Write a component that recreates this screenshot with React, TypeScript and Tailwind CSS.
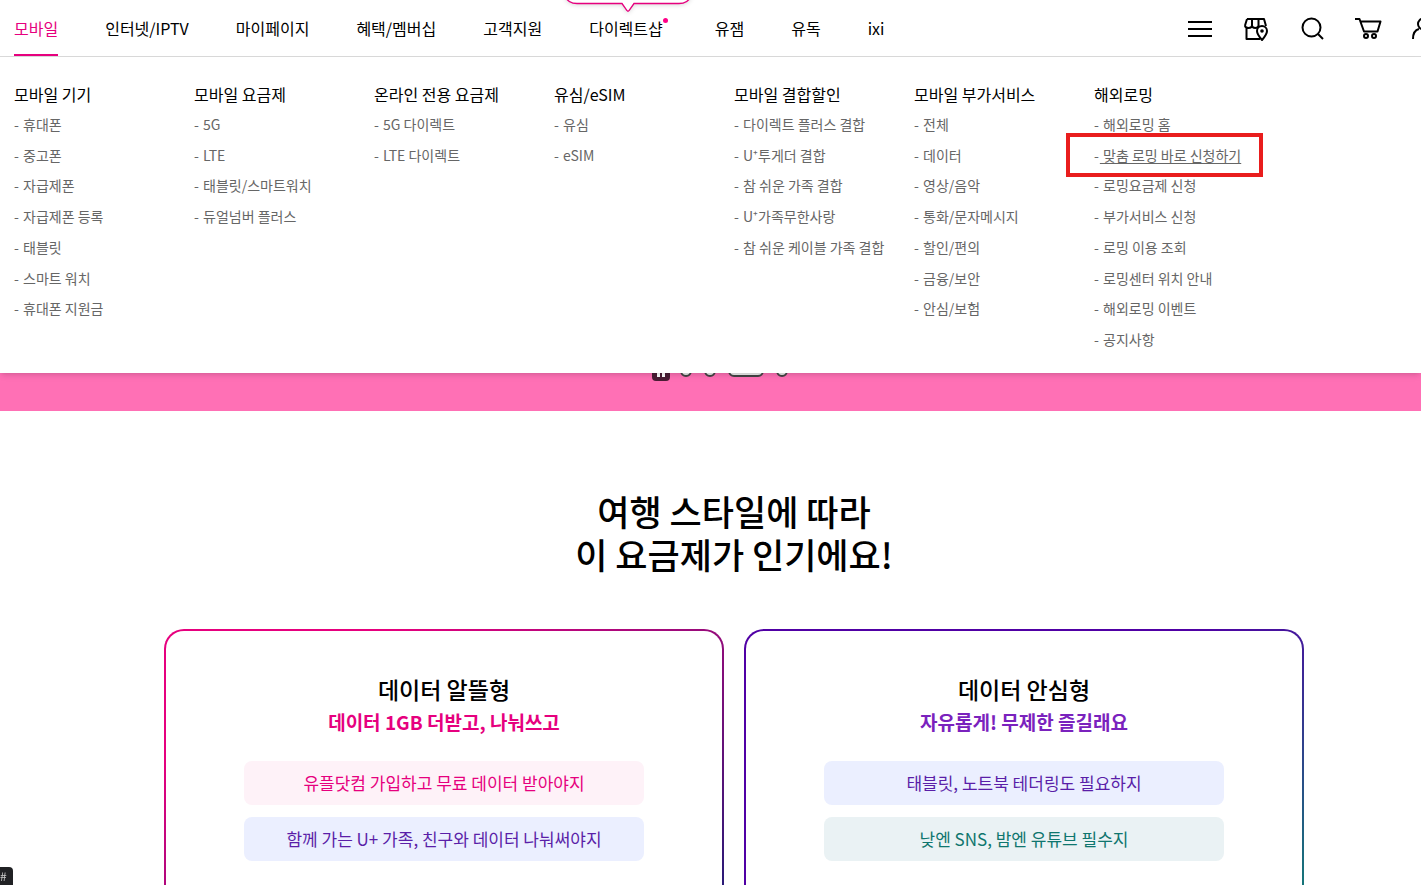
import { ReactNode } from "react";

interface MenuGroup {
  title: string;
  items: string[];
}

interface PlanCardProps {
  title: string;
  subtitle: string;
  frameClass: string;
  subtitleClass: string;
  points: { text: string; className: string }[];
}

const navItems = ["모바일", "인터넷/IPTV", "마이페이지", "혜택/멤버십", "고객지원", "다이렉트샵", "유잼", "유독", "ixi"];

const menuGroups: MenuGroup[] = [
  {
    title: "모바일 기기",
    items: ["휴대폰", "중고폰", "자급제폰", "자급제폰 등록", "태블릿", "스마트 워치", "휴대폰 지원금"],
  },
  { title: "모바일 요금제", items: ["5G", "LTE", "태블릿/스마트워치", "듀얼넘버 플러스"] },
  { title: "온라인 전용 요금제", items: ["5G 다이렉트", "LTE 다이렉트"] },
  { title: "유심/eSIM", items: ["유심", "eSIM"] },
  {
    title: "모바일 결합할인",
    items: ["다이렉트 플러스 결합", "U⁺투게더 결합", "참 쉬운 가족 결합", "U⁺가족무한사랑", "참 쉬운 케이블 가족 결합"],
  },
  {
    title: "모바일 부가서비스",
    items: ["전체", "데이터", "영상/음악", "통화/문자메시지", "할인/편의", "금융/보안", "안심/보험"],
  },
  {
    title: "해외로밍",
    items: [
      "해외로밍 홈",
      "맞춤 로밍 바로 신청하기",
      "로밍요금제 신청",
      "부가서비스 신청",
      "로밍 이용 조회",
      "로밍센터 위치 안내",
      "해외로밍 이벤트",
      "공지사항",
    ],
  },
];

const highlighted = "맞춤 로밍 바로 신청하기";

const plans: PlanCardProps[] = [
  {
    title: "데이터 알뜰형",
    subtitle: "데이터 1GB 더받고, 나눠쓰고",
    frameClass: "bg-[linear-gradient(to_bottom_right,#e6007e_20%,#1b1c76_95%)]",
    subtitleClass: "text-[#e6007e]",
    points: [
      { text: "유플닷컴 가입하고 무료 데이터 받아야지", className: "bg-[#fef2f8] text-[#e6007e]" },
      { text: "함께 가는 U+ 가족, 친구와 데이터 나눠써야지", className: "bg-[#ebefff] text-[#5a1ea8]" },
    ],
  },
  {
    title: "데이터 안심형",
    subtitle: "자유롭게! 무제한 즐길래요",
    frameClass: "bg-[linear-gradient(to_bottom_right,#5000a5_40%,#0f8274_95%)]",
    subtitleClass: "text-[#7a22bd]",
    points: [
      { text: "태블릿, 노트북 테더링도 필요하지", className: "bg-[#ebefff] text-[#5a1ea8]" },
      { text: "낮엔 SNS, 밤엔 유튜브 필수지", className: "bg-[#eaf2f4] text-[#0f766e]" },
    ],
  },
];

const IconButton = ({ label, children }: { label: string; children: ReactNode }) => (
  <button type="button" aria-label={label} className="size-6 shrink-0">
    <svg viewBox="0 0 24 24" className="size-6 overflow-visible fill-none stroke-black stroke-2" strokeLinejoin="round">
      {children}
    </svg>
  </button>
);

const ShopBubble = () => (
  <svg viewBox="0 0 130 16" className="absolute bottom-[38px] left-1/2 h-4 w-[130px] -translate-x-1/2 overflow-visible drop-shadow-sm">
    <path
      d="M2 -4 C4 1 8 3.5 14 3.5 H59 L64 10.5 Q65 12 66 10.5 L71 3.5 H116 C122 3.5 126 1 128 -4"
      fill="#fff"
      stroke="#e6007e"
      strokeWidth="1.3"
    />
  </svg>
);

const Header = () => (
  <header className="flex h-[57px] shrink-0 items-stretch border-b border-[#d9d9d9] pl-[14px]">
    <nav className="flex flex-1 gap-[47px] text-base">
      {navItems.map((item, index) => (
        <a
          key={item}
          href="#"
          className={
            index === 0
              ? "flex items-center whitespace-nowrap border-b-2 border-[#e6007e] pt-[2px] text-[#e6007e]"
              : "relative flex items-center whitespace-nowrap border-b-2 border-transparent pt-[2px]"
          }
        >
          {item}
          {item === "다이렉트샵" && (
            <>
              <ShopBubble />
              <span className="mb-4 size-[5px] rounded-full bg-[#ff0088]" />
            </>
          )}
        </a>
      ))}
    </nav>
    <div className="-mr-[15px] flex items-center gap-8">
      <IconButton label="전체메뉴">
        <path d="M0 6h24M0 13h24M0 20h24" />
      </IconButton>
      <IconButton label="매장찾기">
        <path d="M2.500 11v12H16M3 3h17l2 7M3 3L1 9.500M8 3v6.500M14.500 3v6.500M1 9.500c0 3.300 7 3.300 7 0c0 3.300 6.500 3.300 6.500 0c0 2 1.500 2.500 3 2.500" />
        <path d="M18 24c-3-3.500-5-6-5-9a5 5 0 0 1 10 0c0 3-2 5.500-5 9z" fill="#fff" />
        <circle cx="18" cy="15" r="1.800" fill="#000" stroke="none" />
      </IconButton>
      <IconButton label="검색">
        <circle cx="11.500" cy="11.500" r="9" />
        <path d="M18 18l5 5" />
      </IconButton>
      <IconButton label="장바구니">
        <path d="M-1 3h4.500l4.500 12.500h13.500l3-10h-20" />
        <circle cx="10" cy="20" r="2" />
        <circle cx="18" cy="20" r="2" />
      </IconButton>
      <IconButton label="내 정보">
        <circle cx="11.500" cy="8" r="5.500" />
        <path d="M1 23c0-5 2-9 6-10" />
      </IconButton>
    </div>
  </header>
);

const MegaMenu = () => (
  <div className="z-10 flex shrink-0 bg-white pb-[18px] pl-[14px] pt-6 shadow-md">
    {menuGroups.map((group) => (
      <section key={group.title} className="w-[180px] shrink-0">
        <h2 className="mb-[2px] text-base leading-[26px]">{group.title}</h2>
        <ul className="grid h-[246px] grid-rows-8 text-[14px] text-[#666]">
          {group.items.map((item) => (
            <li key={item} className="relative flex items-center gap-px whitespace-nowrap">
              <span>-</span>
              <a href="#" className={item === highlighted ? "underline underline-offset-2" : ""}>
                &nbsp;{item}
              </a>
              {item === highlighted && (
                <span className="absolute -left-7 -top-[7px] h-11 w-[197px] border-4 border-[#e91d1d]" />
              )}
            </li>
          ))}
        </ul>
      </section>
    ))}
  </div>
);

const Carousel = () => (
  <section className="flex h-[38px] shrink-0 justify-center bg-[#ff70b5] pl-[19px]">
    <div className="-mt-3 flex h-5 items-center gap-3">
      <button type="button" aria-label="일시정지" className="-mr-[2px] flex h-5 w-[18px] items-center justify-center gap-[2px] rounded-sm bg-[#4a1d35]">
        <span className="h-3 w-[3px] bg-white" />
        <span className="h-3 w-[3px] bg-white" />
      </button>
      <button type="button" aria-label="1번 배너" className="size-3 rounded-full border-2 border-[#444] bg-[#eee]" />
      <button type="button" aria-label="2번 배너" className="size-3 rounded-full border-2 border-[#444] bg-[#eee]" />
      <button type="button" aria-label="3번 배너" className="h-3 w-9 rounded-full border-2 border-[#444] bg-[#eee]" />
      <button type="button" aria-label="4번 배너" className="size-3 rounded-full border-2 border-[#444] bg-[#eee]" />
    </div>
  </section>
);

const PlanCard = ({ title, subtitle, frameClass, subtitleClass, points }: PlanCardProps) => (
  <article className={`rounded-[20px] p-[2px] ${frameClass}`}>
    <div className="flex h-[320px] flex-col items-center rounded-[18px] bg-white pt-10 text-center">
      <h3 className="text-[23px] font-medium leading-9">{title}</h3>
      <p className={`text-[19px] font-bold leading-[30px] ${subtitleClass}`}>{subtitle}</p>
      <ul className="mt-6 flex w-[400px] flex-col gap-3 text-[17px]">
        {points.map((point) => (
          <li key={point.text} className={`rounded-lg leading-[44px] ${point.className}`}>
            {point.text}
          </li>
        ))}
      </ul>
    </div>
  </article>
);

export default function App() {
  return (
    <div className="flex h-screen flex-col overflow-hidden bg-white font-['Noto_Sans_CJK_KR',sans-serif] text-black">
      <Header />
      <MegaMenu />
      <Carousel />
      <main className="pl-[47px] pt-[78px]">
        <h1 className="text-center text-[35px] font-medium leading-[43px]">
          여행 스타일에 따라
          <br />
          이 요금제가 인기에요!
        </h1>
        <div className="mx-auto mt-[54px] grid max-w-[1140px] grid-cols-2 gap-5">
          {plans.map((plan) => (
            <PlanCard key={plan.title} {...plan} />
          ))}
        </div>
      </main>
      <div className="fixed bottom-0 left-0 rounded-tr bg-[#202124] pr-[6px] text-[12px] leading-[18px] text-[#ccc]">#</div>
    </div>
  );
}
